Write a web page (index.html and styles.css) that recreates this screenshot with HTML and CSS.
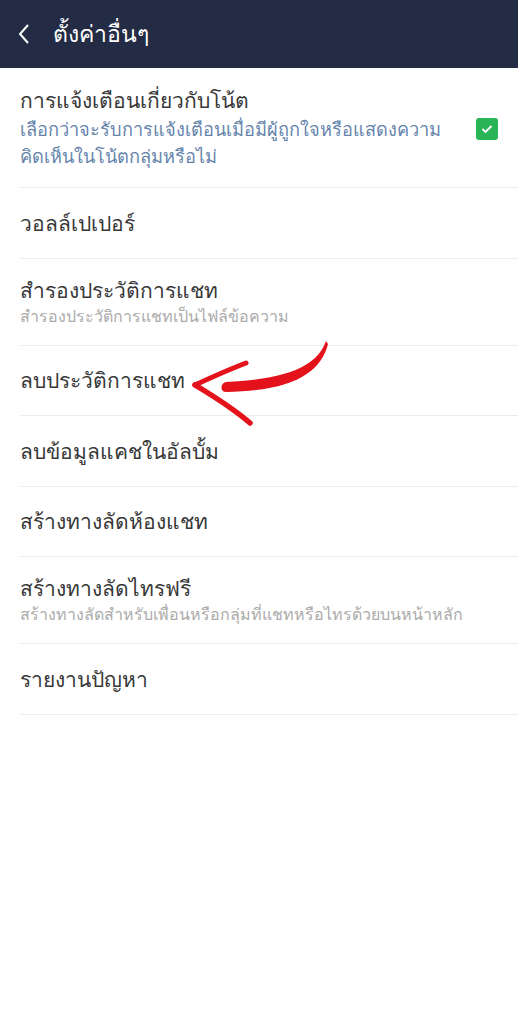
FILE: index.html
```html
<!DOCTYPE html>
<html lang="th">
<head>
    <meta charset="UTF-8">
    <meta name="viewport" content="width=device-width, initial-scale=1.0">
    <title>ตั้งค่าอื่นๆ</title>
    <link rel="stylesheet" href="styles.css">
</head>
<body>
    <div class="header">
        <svg class="back" width="14" height="22" viewBox="0 0 14 22">
            <path d="M11 2 L3 11 L11 20" fill="none" stroke="#ffffff" stroke-width="2"/>
        </svg>
        <h1>ตั้งค่าอื่นๆ</h1>
    </div>
    <div class="list">
        <div class="item item-check">
            <div class="item-text">
                <div class="title">การแจ้งเตือนเกี่ยวกับโน้ต</div>
                <div class="sub sub-blue">เลือกว่าจะรับการแจ้งเตือนเมื่อมีผู้ถูกใจหรือแสดงความ<br>คิดเห็นในโน้ตกลุ่มหรือไม่</div>
            </div>
            <div class="check">
                <svg width="12" height="10" viewBox="0 0 12 10">
                    <path d="M1.5 5 L4.5 8 L10.5 2" fill="none" stroke="#ffffff" stroke-width="1.8"/>
                </svg>
            </div>
        </div>
        <div class="item"><div class="title">วอลล์เปเปอร์</div></div>
        <div class="item item-two">
            <div class="title">สำรองประวัติการแชท</div>
            <div class="sub">สำรองประวัติการแชทเป็นไฟล์ข้อความ</div>
        </div>
        <div class="item"><div class="title">ลบประวัติการแชท</div></div>
        <div class="item"><div class="title">ลบข้อมูลแคชในอัลบั้ม</div></div>
        <div class="item"><div class="title">สร้างทางลัดห้องแชท</div></div>
        <div class="item item-two">
            <div class="title">สร้างทางลัดไทรฟรี</div>
            <div class="sub">สร้างทางลัดสำหรับเพื่อนหรือกลุ่มที่แชทหรือไทรด้วยบนหน้าหลัก</div>
        </div>
        <div class="item"><div class="title">รายงานปัญหา</div></div>
    </div>

    <!-- red hand-drawn arrow pointing at the clear history item -->
    <svg class="arrow" width="160" height="100" viewBox="0 0 160 100">
        <path d="M146 11 C138 34 112 49 46 52 C40 53 40 62 46 62 C114 61 141 42 148 14 Z" fill="#e3121b"/>
        <path d="M66 33 C48 40 30 48 15 55" fill="none" stroke="#e3121b" stroke-width="5" stroke-linecap="round"/>
        <path d="M15 55 C35 67 55 80 70 93" fill="none" stroke="#e3121b" stroke-width="5.5" stroke-linecap="round"/>
    </svg>
</body>
</html>
```

FILE: styles.css
```css
body {
    margin: 0;
    background-color: #ffffff;
    font-family: "Noto Sans", "DejaVu Sans", sans-serif;
    color: #383838;
}

.header {
    height: 68px;
    background-color: #232b45;
    display: flex;
    align-items: center;
    padding-left: 17px;
}

.back {
    margin-right: 22px;
}

.header h1 {
    margin: 0;
    color: #ffffff;
    font-size: 23px;
    font-weight: normal;
}

.list {
    padding-left: 20px;
}

.item {
    height: 69.5px;
    border-bottom: 1px solid #ececec;
    display: flex;
    flex-direction: column;
    justify-content: center;
    padding-right: 18px;
}

.item-two {
    height: 86px;
}

.item-check {
    height: 119px;
    flex-direction: row;
    align-items: center;
}

.item-text {
    flex: 1;
}

.title {
    font-size: 21px;
    line-height: 28px;
    color: #383838;
}

.sub {
    font-size: 16px;
    line-height: 24px;
    color: #ababab;
}

.sub-blue {
    font-size: 18.2px;
    line-height: 27px;
    color: #6584ab;
    margin-top: 2px;
    white-space: nowrap;
}

.check {
    width: 22px;
    height: 22px;
    border-radius: 3px;
    background-color: #29b458;
    display: flex;
    align-items: center;
    justify-content: center;
    margin-left: auto;
    margin-right: 2px;
    margin-top: 3px;
}

.arrow {
    position: absolute;
    left: 180px;
    top: 330px;
}
```
